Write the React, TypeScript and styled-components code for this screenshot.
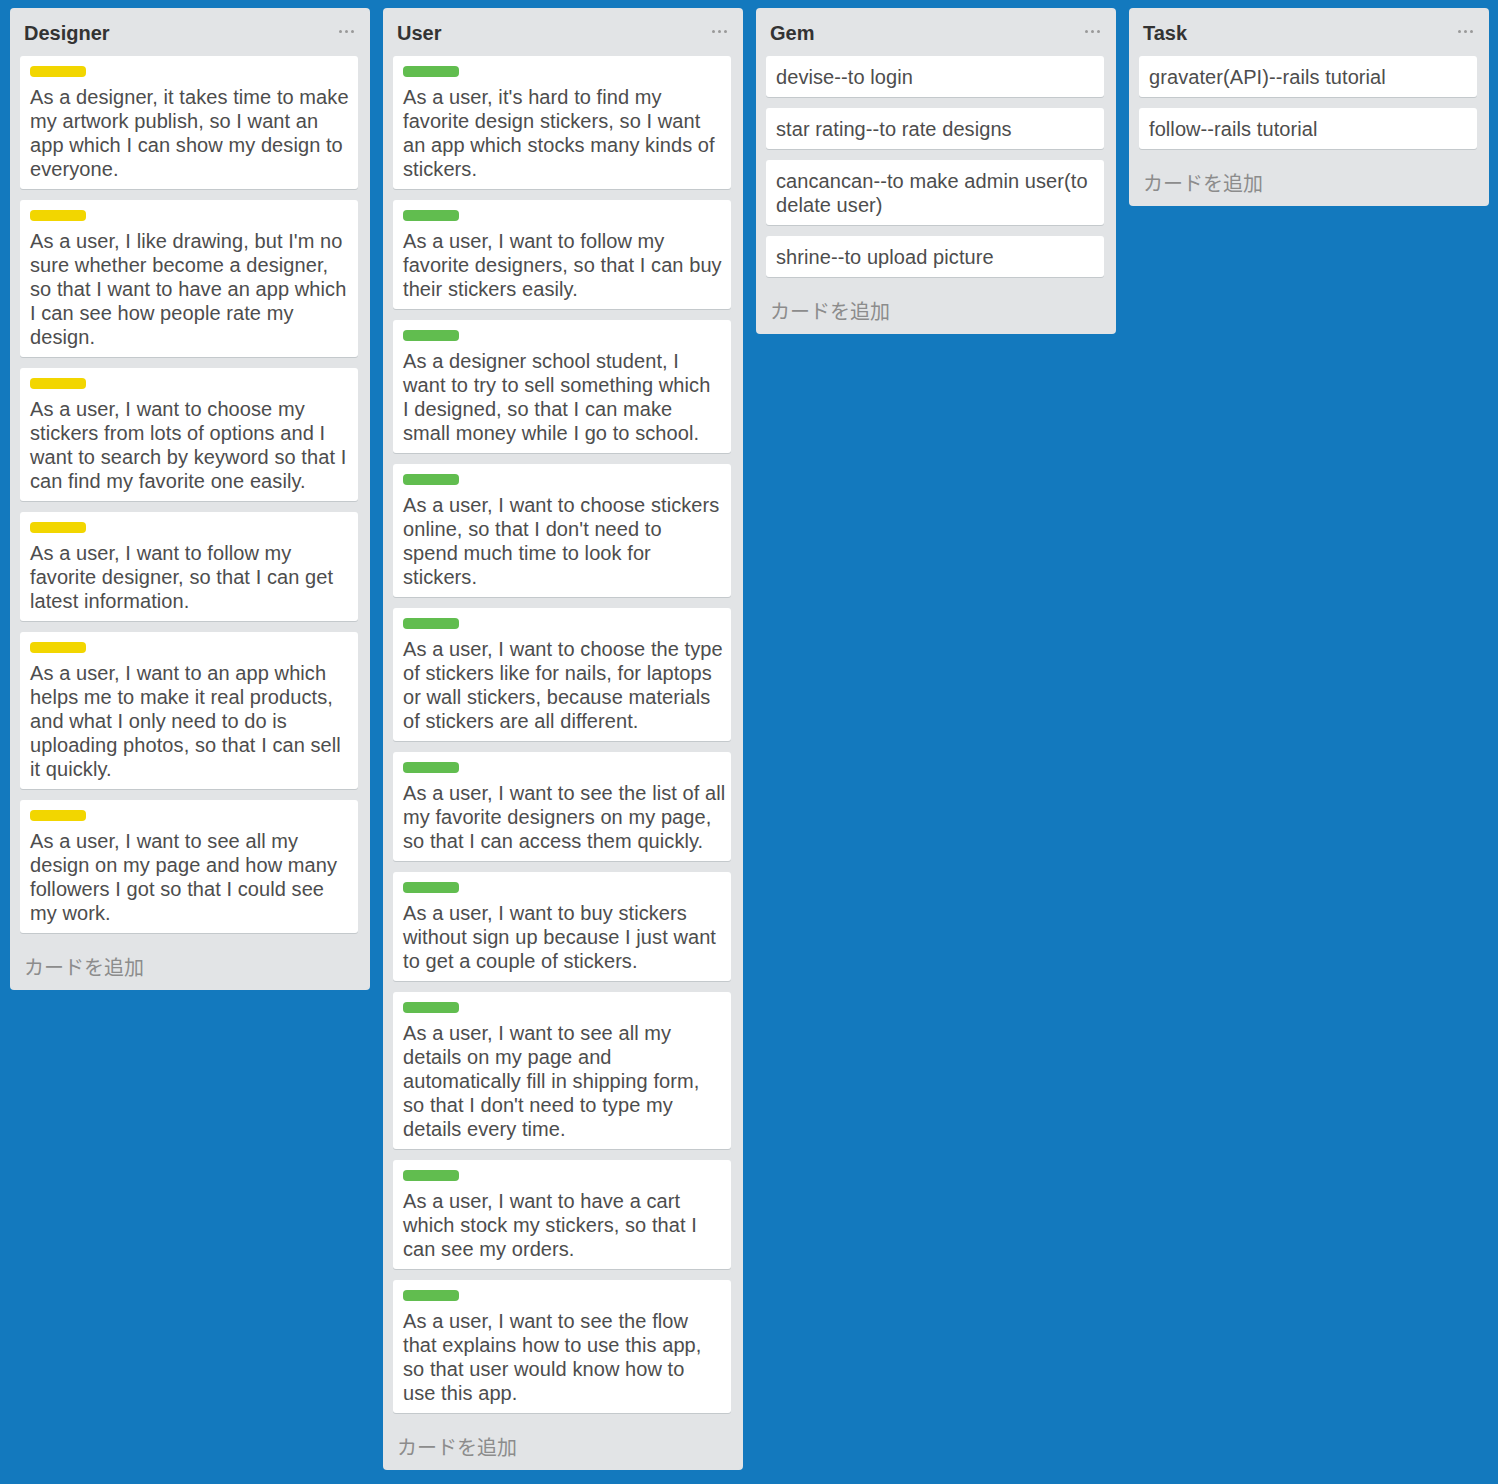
import styled, { createGlobalStyle } from "styled-components";

const GlobalStyle = createGlobalStyle`
  html, body {
    margin: 0;
    padding: 0;
    background: #1379be;
  }
  body {
    font-family: "Liberation Sans", Arial, "Noto Sans CJK JP", sans-serif;
  }
`;

const Board = styled.div`
  display: flex;
  align-items: flex-start;
  gap: 13px;
  padding: 8px 10px;
  min-height: 1484px;
  box-sizing: border-box;
  background: #1379be;
`;

const List = styled.div`
  width: 360px;
  flex-shrink: 0;
  background: #e2e4e6;
  border-radius: 4px;
  padding: 0 12px 0 10px;
  box-sizing: border-box;
`;

const ListHeader = styled.div`
  display: flex;
  align-items: center;
  justify-content: space-between;
  padding: 13px 4px 11px 4px;
`;

const ListTitle = styled.h2`
  margin: 0;
  font-size: 20px;
  line-height: 24px;
  font-weight: 700;
  color: #333;
`;

const MenuDots = styled.div`
  display: flex;
  gap: 3px;
  margin-top: -4px;
  span {
    width: 3px;
    height: 3px;
    border-radius: 50%;
    background: #999;
  }
`;

const Card = styled.div`
  background: #fff;
  border-radius: 3px;
  box-shadow: 0 1px 0 #c4c9cc;
  padding: 9px 4px 8px 10px;
  margin-bottom: 11px;
`;

const Label = styled.div<{ $color: string }>`
  width: 56px;
  height: 11px;
  border-radius: 4px;
  background: ${(p) => p.$color};
  margin: 1px 0 8px;
`;

const CardText = styled.div`
  font-size: 20px;
  line-height: 24px;
  letter-spacing: 0.08px;
  color: #4d4d4d;
  white-space: pre-line;
`;

const AddCard = styled.div`
  padding: 11px 4px;
  font-size: 20px;
  line-height: 24px;
  color: #8c8c8c;
  font-family: "Noto Sans CJK JP", "Liberation Sans", sans-serif;
`;

type ListData = {
  title: string;
  label?: string;
  cards: string[];
};

const YELLOW = "#f2d600";
const GREEN = "#61bd4f";

// line breaks follow the board as it was captured
const lists: ListData[] = [
  {
    title: "Designer",
    label: YELLOW,
    cards: [
      "As a designer, it takes time to make\nmy artwork publish, so I want an\napp which I can show my design to\neveryone.",
      "As a user, I like drawing, but I'm no\nsure whether become a designer,\nso that I want to have an app which\nI can see how people rate my\ndesign.",
      "As a user, I want to choose my\nstickers from lots of options and I\nwant to search by keyword so that I\ncan find my favorite one easily.",
      "As a user, I want to follow my\nfavorite designer, so that I can get\nlatest information.",
      "As a user, I want to an app which\nhelps me to make it real products,\nand what I only need to do is\nuploading photos, so that I can sell\nit quickly.",
      "As a user, I want to see all my\ndesign on my page and how many\nfollowers I got so that I could see\nmy work.",
    ],
  },
  {
    title: "User",
    label: GREEN,
    cards: [
      "As a user, it's hard to find my\nfavorite design stickers, so I want\nan app which stocks many kinds of\nstickers.",
      "As a user, I want to follow my\nfavorite designers, so that I can buy\ntheir stickers easily.",
      "As a designer school student, I\nwant to try to sell something which\nI designed, so that I can make\nsmall money while I go to school.",
      "As a user, I want to choose stickers\nonline, so that I don't need to\nspend much time to look for\nstickers.",
      "As a user, I want to choose the type\nof stickers like for nails, for laptops\nor wall stickers, because materials\nof stickers are all different.",
      "As a user, I want to see the list of all\nmy favorite designers on my page,\nso that I can access them quickly.",
      "As a user, I want to buy stickers\nwithout sign up because I just want\nto get a couple of stickers.",
      "As a user, I want to see all my\ndetails on my page and\nautomatically fill in shipping form,\nso that I don't need to type my\ndetails every time.",
      "As a user, I want to have a cart\nwhich stock my stickers, so that I\ncan see my orders.",
      "As a user, I want to see the flow\nthat explains how to use this app,\nso that user would know how to\nuse this app.",
    ],
  },
  {
    title: "Gem",
    cards: [
      "devise--to login",
      "star rating--to rate designs",
      "cancancan--to make admin user(to\ndelate user)",
      "shrine--to upload picture",
    ],
  },
  {
    title: "Task",
    cards: ["gravater(API)--rails tutorial", "follow--rails tutorial"],
  },
];

export default function App() {
  return (
    <>
      <GlobalStyle />
      <Board>
        {lists.map((list) => (
          <List key={list.title}>
            <ListHeader>
              <ListTitle>{list.title}</ListTitle>
              <MenuDots>
                <span />
                <span />
                <span />
              </MenuDots>
            </ListHeader>
            {list.cards.map((text, i) => (
              <Card key={i}>
                {list.label && <Label $color={list.label} />}
                <CardText>{text}</CardText>
              </Card>
            ))}
            <AddCard>カードを追加</AddCard>
          </List>
        ))}
      </Board>
    </>
  );
}
